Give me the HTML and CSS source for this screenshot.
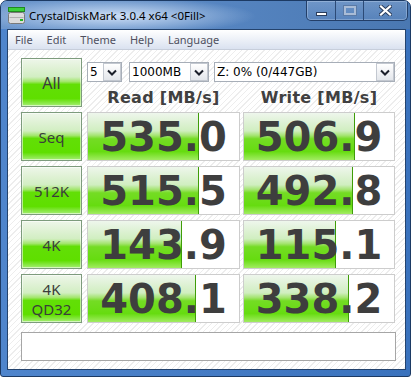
FILE: index.html
```html
<!DOCTYPE html>
<html lang="en">
<head>
  <meta charset="UTF-8" />
  <title>CrystalDiskMark 3.0.4 x64 &lt;0Fill&gt;</title>
  <link rel="stylesheet" href="styles.css">
</head>
<body>

  <div class="window">
    <div class="titlebar">
      <svg class="app-icon" width="17" height="18" viewBox="0 0 17 18">
        <rect x="0.5" y="0.5" width="16" height="4" fill="#3ccf3c" stroke="#1f8a1f"/>
        <rect x="0.5" y="5.5" width="16" height="11" rx="2" fill="#dcdcdc" stroke="#7a7a7a"/>
        <rect x="1.5" y="10" width="14" height="1" fill="#b0b0b0"/>
        <rect x="12" y="12" width="3" height="2" fill="#22b422"/>
      </svg>
      <span class="title">CrystalDiskMark 3.0.4 x64 &lt;0Fill&gt;</span>
      <div class="caption-buttons">
        <div class="cap-btn min"><span class="min-bar"></span></div>
        <div class="cap-btn max"><span class="max-box"></span></div>
        <div class="cap-btn close">
          <svg width="13" height="11" viewBox="0 0 13 11">
            <path d="M2 1.5 L11 9.5 M11 1.5 L2 9.5" stroke="#2a3d5c" stroke-width="4" stroke-linecap="square"/>
            <path d="M2 1.5 L11 9.5 M11 1.5 L2 9.5" stroke="#fff" stroke-width="2.2" stroke-linecap="square"/>
          </svg>
        </div>
      </div>
    </div>

    <div class="client">
      <div class="menu">
        <span>File</span>
        <span>Edit</span>
        <span>Theme</span>
        <span>Help</span>
        <span>Language</span>
      </div>

      <div class="content">
        <div class="grid">
          <div class="test-btn all">All</div>
          <div class="settings">
            <div class="combos">
              <div class="combo c-count"><span class="val">5</span><span class="drop"><svg width="10" height="7" viewBox="0 0 10 7"><path d="M1 1.5 L5 5.5 L9 1.5" fill="none" stroke="#1b1f2a" stroke-width="2"/></svg></span></div>
              <div class="combo c-size"><span class="val">1000MB</span><span class="drop"><svg width="10" height="7" viewBox="0 0 10 7"><path d="M1 1.5 L5 5.5 L9 1.5" fill="none" stroke="#1b1f2a" stroke-width="2"/></svg></span></div>
              <div class="combo c-drive"><span class="val">Z: 0% (0/447GB)</span><span class="drop"><svg width="10" height="7" viewBox="0 0 10 7"><path d="M1 1.5 L5 5.5 L9 1.5" fill="none" stroke="#1b1f2a" stroke-width="2"/></svg></span></div>
            </div>
            <div class="headers">
              <div class="head read-head">Read [MB/s]</div>
              <div class="head write-head">Write [MB/s]</div>
            </div>
          </div>

          <div class="test-btn label">Seq</div>
          <div class="value read"><div class="bar" style="width: 111px"></div><div class="num">535.0</div></div>
          <div class="value write"><div class="bar" style="width: 111px"></div><div class="num">506.9</div></div>

          <div class="test-btn label">512K</div>
          <div class="value read"><div class="bar" style="width: 111px"></div><div class="num">515.5</div></div>
          <div class="value write"><div class="bar" style="width: 109px"></div><div class="num">492.8</div></div>

          <div class="test-btn label">4K</div>
          <div class="value read"><div class="bar" style="width: 94px"></div><div class="num">143.9</div></div>
          <div class="value write"><div class="bar" style="width: 92px"></div><div class="num">115.1</div></div>

          <div class="test-btn label">4K<br>QD32</div>
          <div class="value read"><div class="bar" style="width: 108px"></div><div class="num">408.1</div></div>
          <div class="value write"><div class="bar" style="width: 105px"></div><div class="num">338.2</div></div>
        </div>

        <div class="comment"></div>
      </div>
    </div>
  </div>

</body>
</html>
```

FILE: styles.css
```css
* {
  box-sizing: border-box;
}
body {
  margin: 0;
  background: #fff;
  font-family: "Noto Sans", sans-serif;
}

.window {
  width: 411px;
  height: 377px;
  border: 1px solid #1c3a64;
  border-radius: 7px 7px 3px 3px;
  background: linear-gradient(90deg, #4f85cc, #3a72bd);
  display: flex;
  flex-direction: column;
  overflow: hidden;
}

.titlebar {
  height: 28px;
  flex: none;
  display: flex;
  align-items: center;
  padding-left: 7px;
  background:
    radial-gradient(ellipse 140px 18px at 115px 15px, rgba(225,238,255,0.85), rgba(225,238,255,0) 100%),
    linear-gradient(90deg, #6e98cd, #5584c0 55%, #4a78b2);
}
.app-icon {
  margin-top: 1px;
}
.title {
  margin-left: 4px;
  font-size: 11.5px;
  color: #000;
}

.caption-buttons {
  margin-left: auto;
  margin-right: 2px;
  align-self: flex-start;
  display: flex;
  height: 20px;
  border: 1px solid #233f69;
  border-top: none;
  border-radius: 0 0 5px 5px;
  overflow: hidden;
  box-shadow: inset 0 0 0 1px rgba(190,210,235,0.45);
}
.cap-btn {
  display: flex;
  align-items: center;
  justify-content: center;
  background: linear-gradient(rgba(170,195,228,0.35), rgba(120,155,205,0.25));
}
.cap-btn + .cap-btn {
  border-left: 1px solid #2c4a76;
}
.min {
  width: 28px;
}
.max {
  width: 28px;
}
.close {
  width: 44px;
}
.min-bar {
  width: 11px;
  height: 4px;
  margin-top: 6px;
  background: #fff;
  border: 1px solid #2a3d5c;
}
.max-box {
  width: 12px;
  height: 9px;
  border: 2px solid #a9bcd6;
  box-shadow: 0 0 0 1px #5a7aa6;
}

.client {
  flex: 1;
  margin: 0 4px 6px 6px;
  border: 1px solid #24436d;
  background: repeating-linear-gradient(135deg, #fff 0 3px, #ededed 3px 4px);
  display: flex;
  flex-direction: column;
}

.menu {
  height: 20px;
  flex: none;
  display: flex;
  align-items: center;
  background: linear-gradient(#ffffff, #dae2f0);
  border-bottom: 1px solid #c7cedb;
  font-size: 11px;
  color: #4f5060;
}
.menu span {
  padding: 0 7px;
}

.content {
  padding: 8px 9px 6px 13px;
}

.grid {
  display: grid;
  grid-template-columns: 61px 5px 153px 3px 152px;
  grid-auto-rows: 49px;
  row-gap: 5px;
}

.test-btn {
  grid-column: 1;
  border: 1px solid #7d9b7d;
  box-shadow: inset 0 0 0 1px rgba(255,255,255,0.55);
  background: linear-gradient(#eef6ea, #d2eec2 38%, #a2e66c 48%, #62df06 54%, #5fdf00 84%, #a6ee76 100%);
  display: flex;
  align-items: center;
  justify-content: center;
  text-align: center;
  font-size: 15px;
  line-height: 20px;
  color: #3a3d3a;
}
.all {
  font-size: 16px;
}

.settings {
  grid-column: 3 / 6;
}
.combos {
  display: flex;
  gap: 7px;
  margin-top: 4px;
  height: 20px;
}
.combo {
  display: flex;
  align-items: center;
  border: 1px solid #a7aeb8;
  background: #fff;
  padding-left: 2px;
  font-family: "DejaVu Sans", sans-serif;
  font-size: 12px;
  color: #000;
}
.combo .val {
  flex: 1;
}
.combo .drop {
  width: 18px;
  height: 18px;
  display: flex;
  align-items: center;
  justify-content: center;
  border: 1px solid #c3c8d0;
  background: linear-gradient(#ffffff, #e3e6eb);
}
.c-count {
  width: 35px;
}
.c-size {
  width: 80px;
}
.c-drive {
  width: 181px;
  margin-left: -2px;
}

.headers {
  display: flex;
  gap: 3px;
  margin-top: 6px;
}
.head {
  text-align: center;
  font-family: "DejaVu Sans", sans-serif;
  font-weight: bold;
  font-size: 16px;
  letter-spacing: 0.3px;
  line-height: 19px;
  color: #404040;
}
.read-head {
  width: 153px;
}
.write-head {
  width: 152px;
}

.value {
  display: grid;
  border: 1px solid #cdcdcd;
  background: #fff;
}
.value.read {
  grid-column: 3;
}
.value.write {
  grid-column: 5;
}
.bar,
.num {
  grid-area: 1 / 1;
}
.bar {
  justify-self: start;
  height: 100%;
  background: linear-gradient(#eef6ec, #d0eec0 38%, #a4e470 48%, #74dc24 55%, #66dc10 82%, #a2ec62 100%);
  border-right: 1px solid #3f9d08;
}
.num {
  display: flex;
  align-items: center;
  justify-content: center;
  font-family: "DejaVu Sans", sans-serif;
  font-weight: bold;
  font-size: 40px;
  line-height: 1;
  color: #3e3e3e;
}

.comment {
  margin-top: 9px;
  height: 29px;
  border: 1px solid #a6a6a6;
  background: #fff;
}
```
